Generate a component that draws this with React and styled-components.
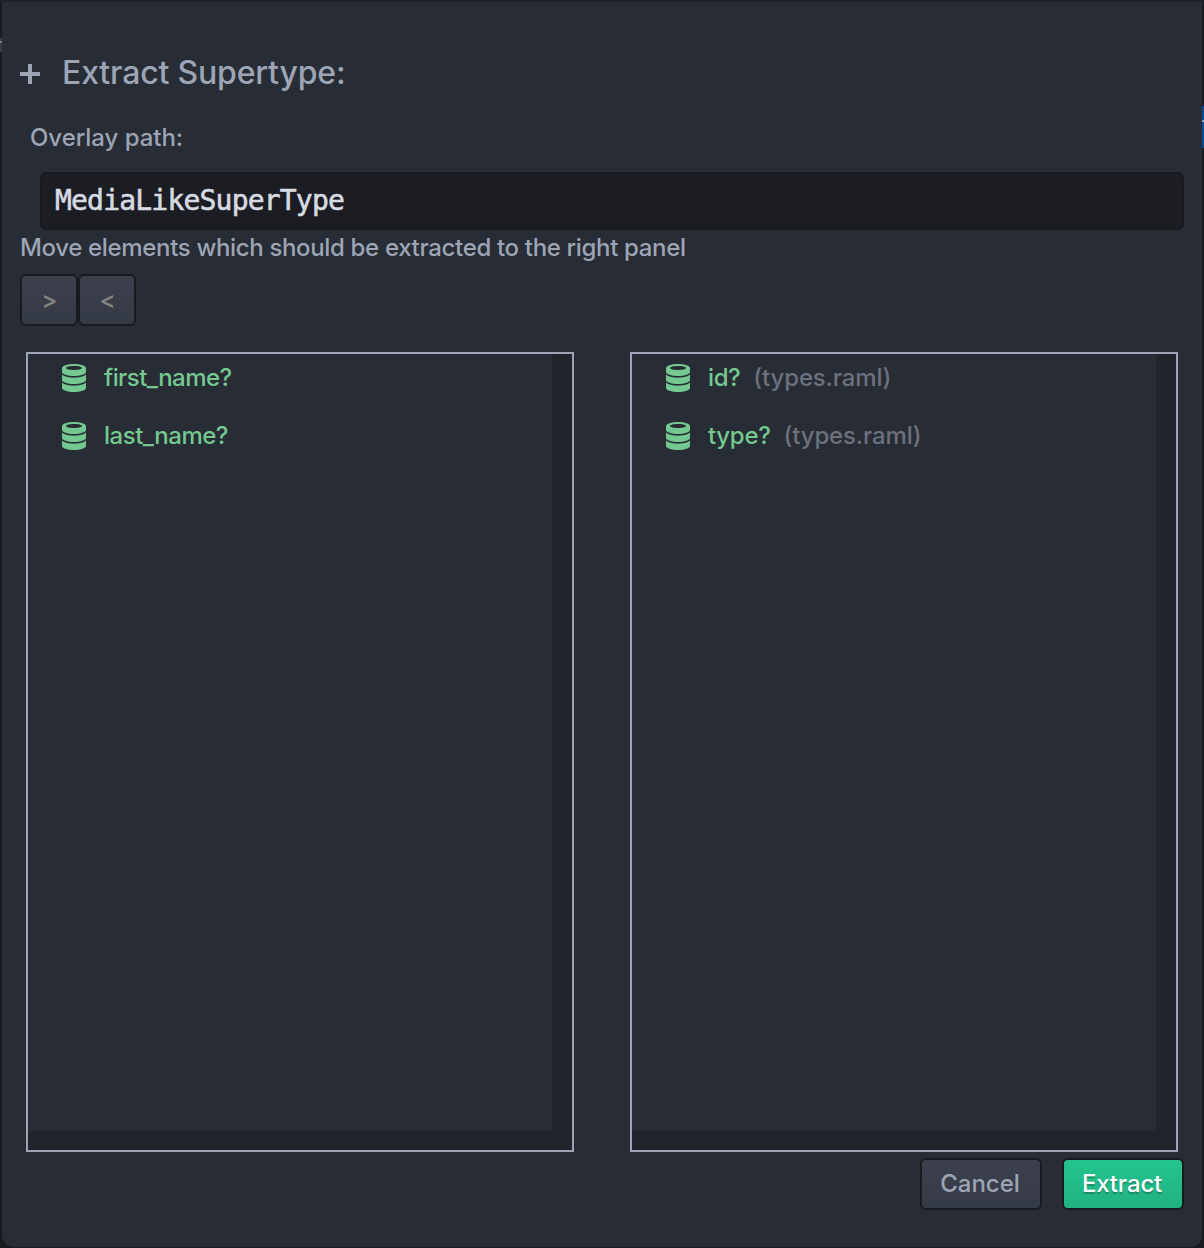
import React from "react";
import styled, { createGlobalStyle } from "styled-components";

const Global = createGlobalStyle`
  * { box-sizing: border-box; }
  body { margin: 0; background: #16181d; }
`;

const Backdrop = styled.div`
  position: relative;
  width: 1204px;
  height: 1248px;
  overflow: hidden;
  padding: 2px 2px 1px;
  background: linear-gradient(#1e2229 0 2px, #191b20 2px);
  font-family: Inter, Roboto, sans-serif;
  font-size: 24px;
  color: #9da5b4;
`;

const EditorHighlight = styled.div`
  position: absolute;
  right: 0;
  top: 106px;
  width: 2px;
  height: 42px;
  background: linear-gradient(#064a8f 0 14px, #8fa3b8 14px 16px, #064a8f 16px);
`;

const EditorGlyph = styled.div`
  position: absolute;
  left: 0;
  top: 38px;
  width: 2px;
  height: 14px;
  background: linear-gradient(#3b3d42 0 3px, #74767a 3px 5px, #3b3d42 5px);
`;

const Dialog = styled.main`
  height: 100%;
  padding: 48px 18px 0;
  background: #282c34;
  border-radius: 0 0 12px 12px;
  display: flex;
  flex-direction: column;
`;

const Text = styled.span`
  display: block;
  white-space: pre;
  font-size: ${(p) => p.$size || 24}px;
  line-height: ${(p) => p.$line || 30}px;
  letter-spacing: ${(p) => p.$track || 0}px;
  font-weight: ${(p) => p.$weight || 450};
  color: ${(p) => p.$color || "inherit"};
`;

const Heading = styled.header`
  display: flex;
  align-items: flex-start;
  gap: 22px;
  height: 44px;
  padding-top: 3px;

  svg {
    margin-top: 11px;
  }
`;

const Label = styled.label`
  display: block;
  height: 30px;
  margin: 29px 0 19px 10px;
`;

const Input = styled.input`
  display: block;
  height: 58px;
  margin: 0 0 0 20px;
  padding: 0 13px 2px;
  border: 2px solid #181a1f;
  border-radius: 6px;
  outline: 0;
  background: #1b1d23;
  color: #d7dae0;
  font: 28px/50px "DejaVu Sans Mono", monospace;
  letter-spacing: -0.8px;
  -webkit-text-stroke: 0.6px #d7dae0;
`;

const Hint = styled.div`
  height: 44px;
  padding-top: 3px;
`;

const Moves = styled.div`
  display: flex;
  height: 52px;
`;

const Button = styled.button`
  display: flex;
  align-items: center;
  justify-content: center;
  width: ${(p) => p.$width}px;
  height: 52px;
  margin: 0;
  padding: ${(p) => (p.$muted ? "0 0 1px 1px" : "0 2px 1px 0")};
  border: 2px solid #181a1f;
  border-radius: 6px;
  background: ${(p) =>
    p.$primary ? "linear-gradient(#24c48e, #20b281)" : "linear-gradient(#3c404d, #353b45)"};
  color: ${(p) => (p.$primary ? "#fff" : p.$muted ? "#85857f" : "#9da5b4")};
  font-family: inherit;
  text-shadow: ${(p) => (p.$primary ? "0 2px 1px rgba(0, 0, 0, 0.25)" : "none")};
`;

const Panels = styled.section`
  display: flex;
  gap: 56px;
  margin: 26px 0 0 6px;
`;

const Panel = styled.div`
  width: 548px;
  height: 800px;
  padding: 0 20px 20px 0;
  border: 2px solid #9da5b4;
  background: #21252b;
`;

const List = styled.ul`
  height: 776px;
  margin: 0;
  padding: 0 0 0 34px;
  list-style: none;
  background: #282c34;
`;

const Item = styled.li`
  display: flex;
  align-items: center;
  height: 58px;
  padding-bottom: 10px;
  color: #73c990;
`;

const Name = styled(Text)`
  margin-left: 18px;
`;

const Origin = styled(Text)`
  margin-left: 13px;
  color: #6b717d;
`;

const Footer = styled.footer`
  display: flex;
  justify-content: flex-end;
  gap: 20px;
  margin-top: 6px;
`;

const PlusIcon = () => (
  <svg width="20" height="20" viewBox="0 0 20 20" fill="#9da5b4" aria-hidden="true">
    <path d="M8 0h4v8h8v4h-8v8H8v-8H0V8h8z" />
  </svg>
);

const DatabaseIcon = () => (
  <svg width="24" height="28" viewBox="0 0 24 28" fill="currentColor" aria-hidden="true">
    <path
      fillRule="evenodd"
      d="M12 0C18.600 0 24 1.800 24 4V8C24 10.200 18.600 12 12 12S0 10.200 0 8V4C0 1.800 5.400 0 12 0ZM12 2C7.600 2 4 2.900 4 4S7.600 6 12 6S20 5.100 20 4S16.400 2 12 2Z"
    />
    <path d="M0 10.300C1.500 12.300 6.300 13.700 12 13.700S22.500 12.300 24 10.300V16C24 18.200 18.600 20 12 20S0 18.200 0 16Z" />
    <path d="M0 18.300C1.500 20.300 6.300 21.700 12 21.700S22.500 20.300 24 18.300V24C24 26.200 18.600 28 12 28S0 26.200 0 24Z" />
  </svg>
);

const available = [
  { name: "first_name?", track: -0.55 },
  { name: "last_name?", track: -0.48 },
];
const extracted = [
  { name: "id?", origin: "(types.raml)", track: -0.4 },
  { name: "type?", origin: "(types.raml)", track: -0.3 },
];

const MemberPanel = ({ items }) => (
  <Panel>
    <List>
      {items.map((item) => (
        <Item key={item.name}>
          <DatabaseIcon />
          <Name $track={item.track}>{item.name}</Name>
          {item.origin && <Origin $track={-0.15}>{item.origin}</Origin>}
        </Item>
      ))}
    </List>
  </Panel>
);

export default function App() {
  return (
    <Backdrop>
      <Global />
      <EditorHighlight />
      <EditorGlyph />
      <Dialog>
        <Heading>
          <PlusIcon />
          <Text $size={32} $line={40} $track={-0.17}>Extract Supertype:</Text>
        </Heading>
        <Label><Text $track={-0.04}>Overlay path:</Text></Label>
        <Input defaultValue="MediaLikeSuperType" spellCheck={false} />
        <Hint><Text $track={-0.34}>Move elements which should be extracted to the right panel</Text></Hint>
        <Moves>
          <Button $width={58} $muted><Text>&gt;</Text></Button>
          <Button $width={58} $muted><Text>&lt;</Text></Button>
        </Moves>
        <Panels>
          <MemberPanel items={available} />
          <MemberPanel items={extracted} />
        </Panels>
        <Footer>
          <Button $width={122}><Text>Cancel</Text></Button>
          <Button $width={122} $primary><Text $weight={550} $track={-0.15}>Extract</Text></Button>
        </Footer>
      </Dialog>
    </Backdrop>
  );
}
